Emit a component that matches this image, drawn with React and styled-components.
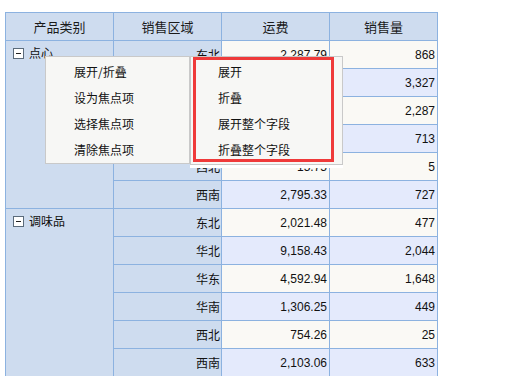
import React from "react"
import styled, { createGlobalStyle } from "styled-components"

const groups = [
  {
    name: "点心",
    rows: [
      ["东北", "2,287.79", "868"],
      ["华北", "13,484.08", "3,327"],
      ["华东", "8,946.40", "2,287"],
      ["华南", "3,006.55", "713"],
      ["西北", "15.75", "5"],
      ["西南", "2,795.33", "727"]
    ]
  },
  {
    name: "调味品",
    rows: [
      ["东北", "2,021.48", "477"],
      ["华北", "9,158.43", "2,044"],
      ["华东", "4,592.94", "1,648"],
      ["华南", "1,306.25", "449"],
      ["西北", "754.26", "25"],
      ["西南", "2,103.06", "633"]
    ]
  }
]

const menuItems = ["展开/折叠", "设为焦点项", "选择焦点项", "清除焦点项"]
const subItems = ["展开", "折叠", "展开整个字段", "折叠整个字段"]

export default function App() {
  let rowIndex = 0
  return (
    <Page>
      <GlobalStyle />
      <Grid>
        <colgroup>
          <col width="108" />
          <col width="108" />
          <col width="108" />
          <col width="108" />
        </colgroup>
        <thead>
          <tr>
            <HeadCell>产品类别</HeadCell>
            <HeadCell>销售区域</HeadCell>
            <HeadCell>运费</HeadCell>
            <HeadCell>销售量</HeadCell>
          </tr>
        </thead>
        <tbody>
          {groups.map(group =>
            group.rows.map((row, i) => {
              const even = rowIndex++ % 2 === 1
              return (
                <Row key={group.name + row[0]}>
                  {i === 0 && (
                    <GroupCell rowSpan={group.rows.length}>
                      <Toggle />
                      {group.name}
                    </GroupCell>
                  )}
                  <RegionCell>{row[0]}</RegionCell>
                  <NumCell even={even}>{row[1]}</NumCell>
                  <NumCell even={even}>{row[2]}</NumCell>
                </Row>
              )
            })
          )}
        </tbody>
      </Grid>

      <Menu>
        {menuItems.map(item => (
          <MenuItem key={item} indent={28}>
            {item}
          </MenuItem>
        ))}
      </Menu>
      <SubMenu>
        {subItems.map(item => (
          <MenuItem key={item} indent={27}>
            {item}
          </MenuItem>
        ))}
        <Highlight />
      </SubMenu>
    </Page>
  )
}

//  ↓↓↓↓↓  STYLES  ↓↓↓↓↓↓↓
const GlobalStyle = createGlobalStyle`
  html, body {
    margin: 0;
    padding: 0;
    background: #ffffff;
    overflow: hidden;
  }
  body {
    font-family: "Noto Sans CJK SC", "Liberation Sans", sans-serif;
    color: #111;
  }
`
const Page = styled.div`
  position: relative;
  width: 505px;
  height: 376px;
  padding: 12px 0 0 5px;
  box-sizing: border-box;
`
const Grid = styled.table`
  border-collapse: collapse;
  table-layout: fixed;
  width: 433px;
  font-size: 12px;
`
const HeadCell = styled.th`
  height: 27px;
  padding: 0;
  background: #cedcef;
  border: 1px solid #8cb2e0;
  font-size: 13px;
  font-weight: normal;
  text-align: center;
  color: #1a1a1a;
`
const Row = styled.tr`
  height: 28px;
`
const GroupCell = styled.td`
  background: #cedcef;
  border: 1px solid #8cb2e0;
  vertical-align: top;
  padding: 4px 4px 0 7px;
  line-height: 16px;
  white-space: nowrap;
`
const Toggle = styled.span`
  display: inline-block;
  position: relative;
  width: 9px;
  height: 9px;
  margin: 0 5px -1px 0;
  border: 1px solid #5b6b7b;
  background: #fff;
  &::after {
    content: "";
    position: absolute;
    left: 2px;
    right: 2px;
    top: 4px;
    height: 1px;
    background: #222;
  }
`
const RegionCell = styled.td`
  height: 27px;
  background: #cedcef;
  border: 1px solid #8cb2e0;
  text-align: right;
  padding: 0 1px 0 0;
`
const NumCell = styled.td`
  height: 27px;
  background: ${props => (props.even ? "#e4eafc" : "#faf9f5")};
  border: 1px solid #8cb2e0;
  text-align: right;
  padding: 0 2px 0 0;
  font-family: "Liberation Sans", sans-serif;
  color: #111;
`
const Menu = styled.div`
  position: absolute;
  left: 45px;
  top: 56px;
  width: 145px;
  height: 108px;
  box-sizing: border-box;
  padding-top: 2px;
  background: #f7f7f5;
  border: 1px solid #c9c9c9;
  font-size: 12px;
`
const SubMenu = styled(Menu)`
  left: 190px;
  width: 153px;
  height: 109px;
  box-shadow: 0 3px 0 #ffffff;
`
const MenuItem = styled.div`
  height: 26px;
  line-height: 26px;
  padding-left: ${props => props.indent}px;
  color: #111;
  white-space: nowrap;
`
const Highlight = styled.div`
  position: absolute;
  left: 2px;
  top: 0;
  width: 141px;
  height: 105px;
  box-sizing: border-box;
  border: 3px solid #ef3a3a;
  pointer-events: none;
`
